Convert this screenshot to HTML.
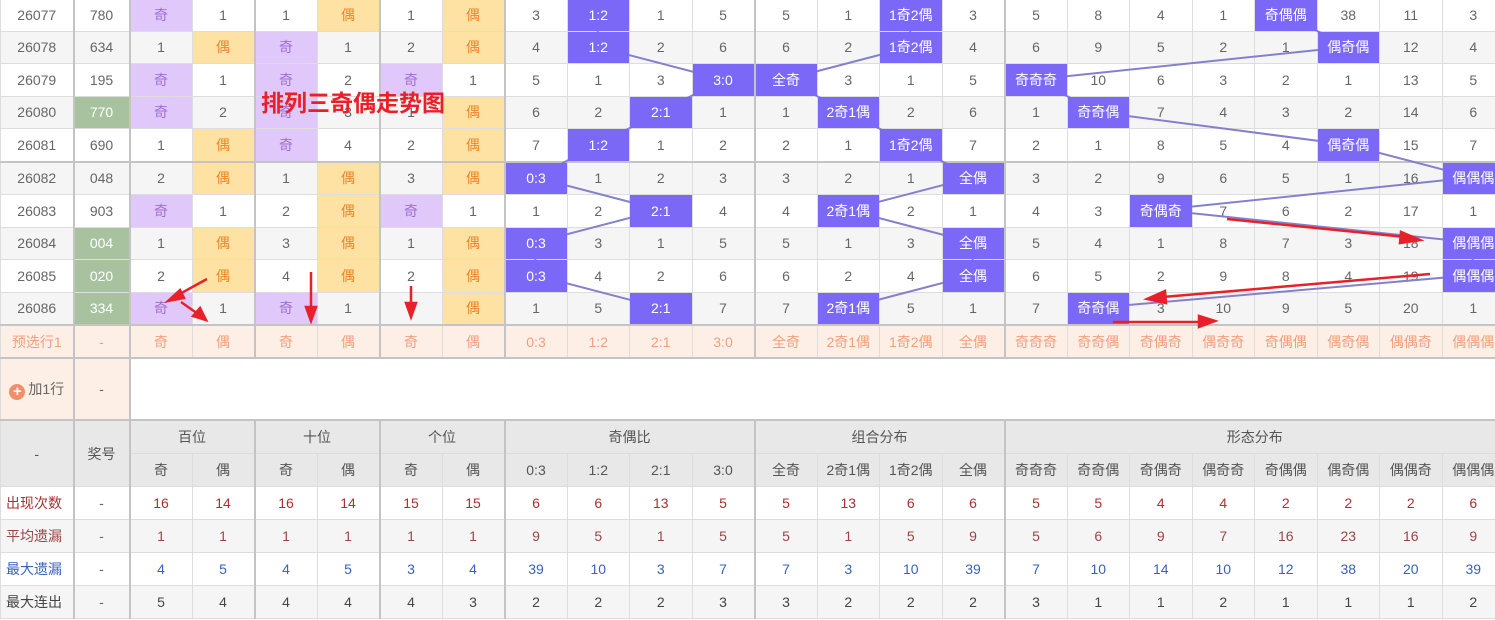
<!DOCTYPE html>
<html><head><meta charset="utf-8"><style>
body{margin:0;width:1495px;height:620px;overflow:hidden;background:#fff;font-family:"Liberation Sans","Noto Sans CJK SC",sans-serif;position:relative}
table{border-collapse:collapse;table-layout:fixed;width:1504px;position:absolute;left:0;top:-2px;font-size:14px;color:#666}
td{border:1px solid #ddd;text-align:center;padding:0;white-space:nowrap;overflow:hidden}
col.L{border-left:2px solid #c4c4c4}
tr.d td{height:31.5px}
tr.d:nth-child(even) td{background:#f5f5f5}
tr.d td.q{background:#e0c9fa;color:#9f6fcf}
tr.d td.o{background:#fde2a4;color:#e8862a}
tr.d td.b{background:#7b68f6;color:#fff;position:relative;z-index:2}
tr.d td.g{background:#a8c2a0;color:#fff}
tr.t td{border-top:2px solid #c4c4c4}
tr.p td{background:#fdeee6;color:#f0a07e;height:31px}
tr.a td{height:60px;border-top:2px solid #c4c4c4}
tr.a td.pp{background:#fdeee6;color:#666}
tr.h td{background:#e8e8e8;color:#555;height:32px}
tr.s td{height:32px}
tr.s:nth-child(even) td{background:#f5f5f5}
.r1 td{color:#a83232}.r2 td{color:#9a4646}.r3 td{color:#3a62b8}.r4 td{color:#444}
.r1 td:nth-child(2),.r2 td:nth-child(2),.r3 td:nth-child(2),.r4 td:nth-child(2){color:#666}
.r1 td:first-child,.r2 td:first-child,.r3 td:first-child,.r4 td:first-child{text-align:left;padding-left:5px}
.plus{display:inline-block;width:16px;height:16px;border-radius:50%;background:#f0906a;color:#fff;font-size:15px;line-height:16px;vertical-align:-2px;margin-right:3px;font-weight:bold}
</style></head><body>
<table>
<colgroup><col style="width:73px"><col class="L" style="width:56px"><col class="L" style="width:62.5px"><col style="width:62.5px"><col class="L" style="width:62.5px"><col style="width:62.5px"><col class="L" style="width:62.5px"><col style="width:62.5px"><col class="L" style="width:62.5px"><col style="width:62.5px"><col style="width:62.5px"><col style="width:62.5px"><col class="L" style="width:62.5px"><col style="width:62.5px"><col style="width:62.5px"><col style="width:62.5px"><col class="L" style="width:62.5px"><col style="width:62.5px"><col style="width:62.5px"><col style="width:62.5px"><col style="width:62.5px"><col style="width:62.5px"><col style="width:62.5px"><col style="width:62.5px"></colgroup>
<tr class="d"><td>26077</td><td>780</td><td class="q">奇</td><td>1</td><td>1</td><td class="o">偶</td><td>1</td><td class="o">偶</td><td>3</td><td class="b">1:2</td><td>1</td><td>5</td><td>5</td><td>1</td><td class="b">1奇2偶</td><td>3</td><td>5</td><td>8</td><td>4</td><td>1</td><td class="b">奇偶偶</td><td>38</td><td>11</td><td>3</td></tr>
<tr class="d"><td>26078</td><td>634</td><td>1</td><td class="o">偶</td><td class="q">奇</td><td>1</td><td>2</td><td class="o">偶</td><td>4</td><td class="b">1:2</td><td>2</td><td>6</td><td>6</td><td>2</td><td class="b">1奇2偶</td><td>4</td><td>6</td><td>9</td><td>5</td><td>2</td><td>1</td><td class="b">偶奇偶</td><td>12</td><td>4</td></tr>
<tr class="d"><td>26079</td><td>195</td><td class="q">奇</td><td>1</td><td class="q">奇</td><td>2</td><td class="q">奇</td><td>1</td><td>5</td><td>1</td><td>3</td><td class="b">3:0</td><td class="b">全奇</td><td>3</td><td>1</td><td>5</td><td class="b">奇奇奇</td><td>10</td><td>6</td><td>3</td><td>2</td><td>1</td><td>13</td><td>5</td></tr>
<tr class="d"><td>26080</td><td class="g">770</td><td class="q">奇</td><td>2</td><td class="q">奇</td><td>3</td><td>1</td><td class="o">偶</td><td>6</td><td>2</td><td class="b">2:1</td><td>1</td><td>1</td><td class="b">2奇1偶</td><td>2</td><td>6</td><td>1</td><td class="b">奇奇偶</td><td>7</td><td>4</td><td>3</td><td>2</td><td>14</td><td>6</td></tr>
<tr class="d"><td>26081</td><td>690</td><td>1</td><td class="o">偶</td><td class="q">奇</td><td>4</td><td>2</td><td class="o">偶</td><td>7</td><td class="b">1:2</td><td>1</td><td>2</td><td>2</td><td>1</td><td class="b">1奇2偶</td><td>7</td><td>2</td><td>1</td><td>8</td><td>5</td><td>4</td><td class="b">偶奇偶</td><td>15</td><td>7</td></tr>
<tr class="d t"><td>26082</td><td>048</td><td>2</td><td class="o">偶</td><td>1</td><td class="o">偶</td><td>3</td><td class="o">偶</td><td class="b">0:3</td><td>1</td><td>2</td><td>3</td><td>3</td><td>2</td><td>1</td><td class="b">全偶</td><td>3</td><td>2</td><td>9</td><td>6</td><td>5</td><td>1</td><td>16</td><td class="b">偶偶偶</td></tr>
<tr class="d"><td>26083</td><td>903</td><td class="q">奇</td><td>1</td><td>2</td><td class="o">偶</td><td class="q">奇</td><td>1</td><td>1</td><td>2</td><td class="b">2:1</td><td>4</td><td>4</td><td class="b">2奇1偶</td><td>2</td><td>1</td><td>4</td><td>3</td><td class="b">奇偶奇</td><td>7</td><td>6</td><td>2</td><td>17</td><td>1</td></tr>
<tr class="d"><td>26084</td><td class="g">004</td><td>1</td><td class="o">偶</td><td>3</td><td class="o">偶</td><td>1</td><td class="o">偶</td><td class="b">0:3</td><td>3</td><td>1</td><td>5</td><td>5</td><td>1</td><td>3</td><td class="b">全偶</td><td>5</td><td>4</td><td>1</td><td>8</td><td>7</td><td>3</td><td>18</td><td class="b">偶偶偶</td></tr>
<tr class="d"><td>26085</td><td class="g">020</td><td>2</td><td class="o">偶</td><td>4</td><td class="o">偶</td><td>2</td><td class="o">偶</td><td class="b">0:3</td><td>4</td><td>2</td><td>6</td><td>6</td><td>2</td><td>4</td><td class="b">全偶</td><td>6</td><td>5</td><td>2</td><td>9</td><td>8</td><td>4</td><td>19</td><td class="b">偶偶偶</td></tr>
<tr class="d"><td>26086</td><td class="g">334</td><td class="q">奇</td><td>1</td><td class="q">奇</td><td>1</td><td>3</td><td class="o">偶</td><td>1</td><td>5</td><td class="b">2:1</td><td>7</td><td>7</td><td class="b">2奇1偶</td><td>5</td><td>1</td><td>7</td><td class="b">奇奇偶</td><td>3</td><td>10</td><td>9</td><td>5</td><td>20</td><td>1</td></tr>
<tr class="p t"><td>预选行1</td><td>-</td><td>奇</td><td>偶</td><td>奇</td><td>偶</td><td>奇</td><td>偶</td><td>0:3</td><td>1:2</td><td>2:1</td><td>3:0</td><td>全奇</td><td>2奇1偶</td><td>1奇2偶</td><td>全偶</td><td>奇奇奇</td><td>奇奇偶</td><td>奇偶奇</td><td>偶奇奇</td><td>奇偶偶</td><td>偶奇偶</td><td>偶偶奇</td><td>偶偶偶</td></tr>
<tr class="a"><td class="pp"><span class="plus">+</span>加1行</td><td class="pp">-</td><td colspan="22"></td></tr>
<tr class="h t"><td rowspan="2">-</td><td rowspan="2">奖号</td><td colspan="2">百位</td><td colspan="2">十位</td><td colspan="2">个位</td><td colspan="4">奇偶比</td><td colspan="4">组合分布</td><td colspan="8">形态分布</td></tr>
<tr class="h"><td>奇</td><td>偶</td><td>奇</td><td>偶</td><td>奇</td><td>偶</td><td>0:3</td><td>1:2</td><td>2:1</td><td>3:0</td><td>全奇</td><td>2奇1偶</td><td>1奇2偶</td><td>全偶</td><td>奇奇奇</td><td>奇奇偶</td><td>奇偶奇</td><td>偶奇奇</td><td>奇偶偶</td><td>偶奇偶</td><td>偶偶奇</td><td>偶偶偶</td></tr>
<tr class="s r1"><td>出现次数</td><td>-</td><td>16</td><td>14</td><td>16</td><td>14</td><td>15</td><td>15</td><td>6</td><td>6</td><td>13</td><td>5</td><td>5</td><td>13</td><td>6</td><td>6</td><td>5</td><td>5</td><td>4</td><td>4</td><td>2</td><td>2</td><td>2</td><td>6</td></tr>
<tr class="s r2"><td>平均遗漏</td><td>-</td><td>1</td><td>1</td><td>1</td><td>1</td><td>1</td><td>1</td><td>9</td><td>5</td><td>1</td><td>5</td><td>5</td><td>1</td><td>5</td><td>9</td><td>5</td><td>6</td><td>9</td><td>7</td><td>16</td><td>23</td><td>16</td><td>9</td></tr>
<tr class="s r3"><td>最大遗漏</td><td>-</td><td>4</td><td>5</td><td>4</td><td>5</td><td>3</td><td>4</td><td>39</td><td>10</td><td>3</td><td>7</td><td>7</td><td>3</td><td>10</td><td>39</td><td>7</td><td>10</td><td>14</td><td>10</td><td>12</td><td>38</td><td>20</td><td>39</td></tr>
<tr class="s r4"><td>最大连出</td><td>-</td><td>5</td><td>4</td><td>4</td><td>4</td><td>4</td><td>3</td><td>2</td><td>2</td><td>2</td><td>3</td><td>3</td><td>2</td><td>2</td><td>2</td><td>3</td><td>1</td><td>1</td><td>2</td><td>1</td><td>1</td><td>1</td><td>2</td></tr>
</table>
<svg width="1495" height="620" style="position:absolute;left:0;top:0;z-index:1" fill="none" stroke="#8580cc" stroke-width="2">
<polyline points="597.75,14.3 597.75,46.9 722.75,79.5 660.25,112.1 597.75,144.7 535.25,177.3 660.25,209.9 535.25,242.5 535.25,275.1 660.25,307.7"/>
<polyline points="910.25,14.3 910.25,46.9 785.25,79.5 847.75,112.1 910.25,144.7 972.75,177.3 847.75,209.9 972.75,242.5 972.75,275.1 847.75,307.7"/>
<polyline points="1285.25,14.3 1347.75,46.9 1035.25,79.5 1097.75,112.1 1347.75,144.7 1472.75,177.3 1160.25,209.9 1472.75,242.5 1472.75,275.1 1097.75,307.7"/>
</svg>
<div style="position:absolute;left:261px;top:87px;z-index:3;color:#e8202a;font-size:23px;font-weight:bold;font-family:'Noto Sans CJK SC',sans-serif;line-height:28px">排列三奇偶走势图</div>
<svg width="1495" height="620" style="position:absolute;left:0;top:0;z-index:3" stroke="#e8202a" fill="#e8202a" stroke-width="2.5">
<line x1="207" y1="279" x2="176" y2="296"/><polygon points="168,301 180,290 184,298"/>
<line x1="181" y1="302" x2="198" y2="314"/><polygon points="206,320 193,316 200,308"/>
<line x1="311" y1="272" x2="311" y2="310"/><polygon points="311,321 306,307 316,307"/>
<line x1="411" y1="286" x2="411" y2="306"/><polygon points="411,317 406,303 416,303"/>
<line x1="1227" y1="219" x2="1405" y2="237"/><polygon points="1420,240 1401,232 1400,243"/>
<line x1="1430" y1="274" x2="1163" y2="297"/><polygon points="1147,299 1165,291 1166,303"/>
<line x1="1113" y1="322" x2="1200" y2="322"/><polygon points="1215,321 1199,316 1199,327"/>
</svg>
</body></html>
